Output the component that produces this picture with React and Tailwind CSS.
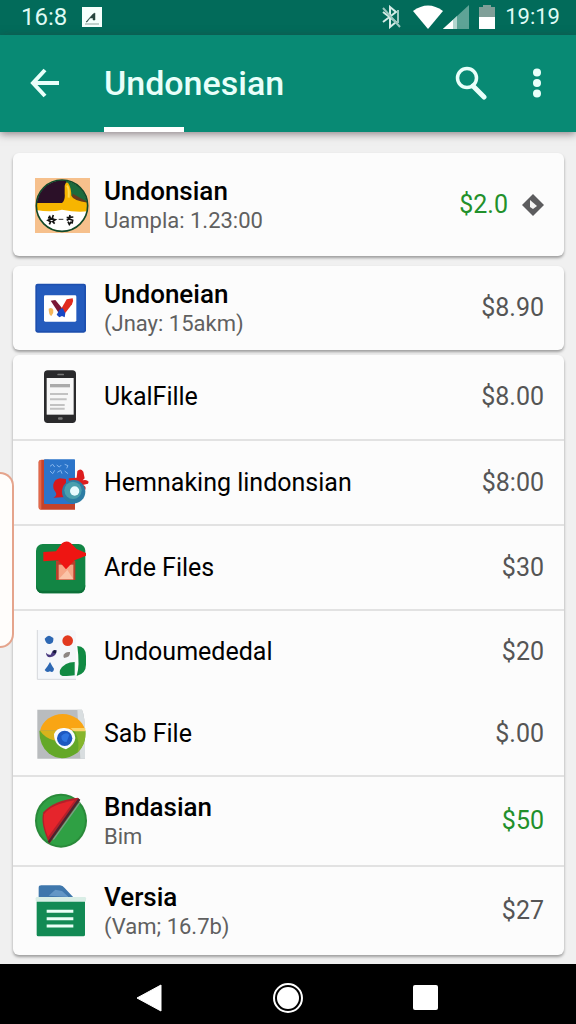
import React from 'react';

const AppBadge = () => (
  <svg viewBox="0 0 168 168" className="h-14 w-14">
    <defs>
      <clipPath id="badge">
        <circle cx="84" cy="86" r="76" />
      </clipPath>
    </defs>
    <rect x="3" y="3" width="165" height="165" fill="#f6c08c" />
    <g clipPath="url(#badge)">
      <rect width="168" height="168" fill="#fff" />
      <rect width="96" height="80" fill="#2b1028" />
      <rect x="96" width="72" height="80" fill="#1d6b3c" />
      <path d="M116 50l50 28h-56z" fill="#6a3a1c" />
      <path d="M0 78H84Q94 70 92 50V26Q96 10 104 20Q112 34 112 56Q118 72 168 78V102Q130 108 84 98Q50 108 0 98Z" fill="#f7b500" />
      <path d="M99 26Q106 34 104 62" stroke="#ffd84d" strokeWidth="6" fill="none" />
    </g>
    <circle cx="84" cy="86" r="77" fill="none" stroke="#12492a" strokeWidth="5" />
    <path d="M46 116l4 10-8 4 8 4-4 8M58 114l-4 12 10 2-8 6 6 6M42 122l18 4M98 122l20-2M108 114l-2 12-8 4M106 126l10 4-2 10M102 134l4 8 6-8" stroke="#111" strokeWidth="5" fill="none" />
    <path d="M74 127h14" stroke="#333" strokeWidth="3" />
  </svg>
);

const BlueFrame = () => (
  <svg viewBox="0 0 168 168" className="h-14 w-14">
    <rect x="4" y="11" width="152" height="147" rx="7" fill="#1d4fae" />
    <rect x="9" y="16" width="142" height="137" rx="4" fill="#245bbd" />
    <rect x="30" y="46" width="97" height="79" rx="4" fill="#fff" />
    <path d="M44 86q10-6 14 4q2 10-6 18q-8-4-8-22z" fill="#f5b65a" />
    <path d="M50 62l14-2 28 34-12 14z" fill="#7a1735" />
    <path d="M98 58l18-3q4 10-2 18l-22 28-14-8z" fill="#e02a1e" />
    <path d="M76 90l10-6 8 16-2 12-8-4-8 4-8-8z" fill="#1747c4" />
  </svg>
);

const Phone = () => (
  <svg viewBox="0 0 168 168" className="h-14 w-14">
    <rect x="30" y="4" width="96" height="158" rx="11" fill="#2a2a2c" />
    <rect x="38" y="27" width="81" height="110" fill="#f7f7f7" />
    <rect x="70" y="14" width="20" height="5" rx="2" fill="#777" />
    <rect x="72" y="145" width="14" height="7" rx="3" fill="#777" />
    <path d="M48 50h60" stroke="#aaa" strokeWidth="10" />
    <path d="M48 75h54M48 91h50M48 108h44M48 119h44" stroke="#c2c2c2" strokeWidth="6" />
  </svg>
);

const Book = () => (
  <svg viewBox="0 0 168 168" className="h-14 w-14">
    <path d="M14 22q0-8 10-8h20v128h79v22H22q-8 0-8-8z" fill="#c4432b" />
    <path d="M14 22q0-8 8-8v150q-8 0-8-8z" fill="#e2694a" />
    <rect x="30" y="13" width="93" height="134" rx="2" fill="#2b74c9" />
    <path d="M48 34l8-6 6 8M68 30l8 6 6-6M92 28l10 4-4 8M48 48l8 8 6-10M70 52l10-6 4 10M92 48l10 8" stroke="#86b6ee" strokeWidth="3" fill="none" />
    <path d="M58 88q4-16 20-18l18 2v54l-38 2q14-8 6-18-8-8-6-22z" fill="#d8171c" />
    <path d="M104 70l24-2 2-20q10-10 18 2l4 20-6 6q12-4 18 4l-2 6-16 4q12 4 8 14l-20 4-28-12z" fill="#dd1d1f" />
    <circle cx="119" cy="110" r="35" fill="#2d7da4" />
    <circle cx="117" cy="106" r="26" fill="#4a9fae" />
    <circle cx="122" cy="108" r="14" fill="#e8fbff" />
  </svg>
);

const ArrowBox = () => (
  <svg viewBox="0 0 168 168" className="h-14 w-14">
    <rect x="6" y="12" width="148" height="148" rx="20" fill="#128544" />
    <path d="M6 134q0 26 20 26h108q20 0 20-26q-4 18-20 18H26q-16 0-20-18z" fill="#0c7038" />
    <path d="M66 62h58v58H66z" fill="#b8402c" />
    <path d="M74 74h44v44H74z" fill="#f6a585" />
    <path d="M74 118l26-28 18 28z" fill="#fbc4a8" />
    <path d="M28 36l38-2 18-24q12-10 26-1l18 18 28 12v8l-34 14-26 27-24-27-44 3z" fill="#ee1512" />
  </svg>
);

const Shapes = () => (
  <svg viewBox="0 0 168 168" className="h-14 w-14">
    <path d="M10 18h104q12 0 12 14v134H10z" fill="#f5f7fa" />
    <path d="M10 18v148h116" fill="none" stroke="#d5d8dc" strokeWidth="3" />
    <path d="M32 44q10-12 16-8l10 6q2 16-10 18-12 2-16-16z" fill="#2c67b3" />
    <circle cx="101" cy="50" r="16" fill="#e23a1f" />
    <path d="M36 86q6 8 14 6l6-12 12-2q0 20-20 22-12-2-12-14z" fill="#4a3a80" />
    <circle cx="62" cy="83" r="5" fill="#161a3a" />
    <path d="M88 96q4-14 20-12q2 16-18 18z" fill="#8d8683" />
    <path d="M48 114q6 12 12 20-2 14-12 8-10 6-16-4 10-12 16-24z" fill="#2c67b3" />
    <path d="M78 138q14-24 44-24v40q-10 2-36 2-12-2-8-18z" fill="#118a43" />
    <path d="M130 66q26 2 26 30v26q0 26-28 34q10-30 2-90z" fill="#118a43" />
  </svg>
);

const Browser = () => (
  <svg viewBox="0 0 168 168" className="h-14 w-14">
    <path d="M10 11h134q9 20 9 70v77H10z" fill="#b9bcbe" />
    <path d="M130 11h14q9 20 9 70v77h-14z" fill="#d9dee0" />
    <path d="M18 74a70 66 0 0 1 136 0z" fill="#f9a514" />
    <path d="M16 74h138q4 40-24 66-46 32-86 2-28-24-28-68z" fill="#64a828" />
    <path d="M18 74h60l-14 30q-30-6-46-30z" fill="#d8b31c" />
    <path d="M122 74h32q4 40-24 66 10-30-8-66z" fill="#86b52c" />
    <path d="M110 66h44v10h-34z" fill="#fbd46b" />
    <path d="M60 84q8-20 32-18 28 0 32 30-2 22-28 34-36-10-36-46z" fill="#f7fbff" />
    <circle cx="92" cy="97" r="23" fill="#1c58c0" />
    <path d="M82 90q12-14 24-4l-8 22q-16 0-16-18z" fill="#2d74e0" />
  </svg>
);

const Disc = () => (
  <svg viewBox="0 0 168 168" className="h-14 w-14">
    <ellipse cx="81" cy="83" rx="78" ry="81" fill="#2a8a3a" />
    <ellipse cx="81" cy="83" rx="72" ry="75" fill="#2fa044" />
    <path d="M132 14l6 8-92 130q-28-60-18-94 30-36 104-44z" fill="#b3202a" />
    <path d="M122 22q-70 12-92 42-4 30 12 68z" fill="#e5252c" />
    <path d="M136 18L44 148" stroke="#4b2430" strokeWidth="7" />
    <path d="M138 28L58 140" stroke="#7b9c86" strokeWidth="4" />
  </svg>
);

const Drawer = () => (
  <svg viewBox="0 0 168 168" className="h-14 w-14">
    <path d="M14 14q0-7 8-7h56q8 0 14 8l28 30H14z" fill="#3f77ac" />
    <path d="M44 38l20-18 20 4 20 18z" fill="#6397c6" />
    <rect x="8" y="52" width="145" height="108" rx="5" fill="#128a54" />
    <rect x="5" y="42" width="151" height="14" rx="4" fill="#d9eee6" />
    <path d="M38 85h80M38 107h80M38 129h80" stroke="#e9fff6" strokeWidth="9" />
  </svg>
);

const groups = [
  [{ name: 'Undonsian', detail: 'Uampla: 1.23:00', price: '$2.0', paid: true, tag: true, bold: true, icon: AppBadge, size: 'min-h-[103px]' }],
  [{ name: 'Undoneian', detail: '(Jnay: 15akm)', price: '$8.90', bold: true, icon: BlueFrame, size: 'min-h-[84px]' }],
  [
    { name: 'UkalFille', price: '$8.00', icon: Phone, size: 'min-h-[84px]' },
    { name: 'Hemnaking lindonsian', price: '$8:00', icon: Book, size: 'min-h-[85px]', line: true },
    { name: 'Arde Files', price: '$30', icon: ArrowBox, size: 'min-h-[85px]', line: true },
    { name: 'Undoumededal', price: '$20', icon: Shapes, size: 'min-h-[83px]', line: true },
    { name: 'Sab File', price: '$.00', icon: Browser, size: 'min-h-[83px]' },
    { name: 'Bndasian', detail: 'Bim', price: '$50', paid: true, bold: true, icon: Disc, size: 'min-h-[90px]', line: true },
    { name: 'Versia', detail: '(Vam; 16.7b)', price: '$27', bold: true, icon: Drawer, size: 'min-h-[90px]', line: true },
  ],
];

const Row = ({ item }) => {
  const Icon = item.icon;
  return (
    <li className={`flex items-center gap-[14px] pl-[21px] pr-5 ${item.size} ${item.line ? 'border-t-2 border-[#e2e2e2]' : ''}`}>
      <Icon />
      <div className="min-w-0 flex-1">
        <p className={`leading-8 text-black ${item.bold ? 'text-[26px] font-medium' : 'text-[25px]'}`}>{item.name}</p>
        {item.detail && <p className="text-[22px] leading-7 text-[#606060]">{item.detail}</p>}
      </div>
      <span className={`text-[25px] leading-8 ${item.paid ? 'text-[#22902b]' : 'text-[#555]'}`}>{item.price}</span>
      {item.tag && (
        <svg viewBox="0 0 22 22" className="h-[22px] w-[22px]">
          <path d="M11 0l11 11-11 11L0 11z" fill="#5c5c5e" />
          <path d="M8 6l7 6-4 3-3-2z" fill="#f4f4f4" />
        </svg>
      )}
    </li>
  );
};

const StatusBar = () => (
  <div className="flex h-[35px] items-center bg-[#026b5a] pb-[2px] pl-[21px] pr-4 leading-8 text-[#dffaf4]">
    <span className="text-2xl">16:8</span>
    <svg viewBox="0 0 20 20" className="ml-[15px] h-5 w-5">
      <rect width="20" height="20" fill="#f5fffc" />
      <path d="M4 15L11 7L13 6V13H11V11H8L5 15ZM3 17h14" fill="#26443e" stroke="#26443e" strokeWidth="0.5" />
    </svg>
    <div className="ml-auto flex items-center">
      <svg viewBox="0 0 20 24" className="h-6 w-5">
        <path d="M2 7l13 10-6 5V2l6 5L2 17" fill="none" stroke="#d5ece7" strokeWidth="2" />
        <path d="M2 3l17 19M17 5v13" fill="none" stroke="#9cc8bf" strokeWidth="2" />
      </svg>
      <svg viewBox="0 0 30 24" className="ml-3 h-6 w-[30px]">
        <path d="M0 6Q15-5 30 6L15 24z" fill="#fff" />
      </svg>
      <svg viewBox="0 0 26 24" className="h-6 w-[26px]">
        <path d="M26 0v24H0z" fill="#5ea396" />
        <path d="M14 11v13H0z" fill="#b4d6cf" />
        <path d="M10 15v9H0z" fill="#fff" />
      </svg>
      <svg viewBox="0 0 16 24" className="ml-[10px] h-6 w-4">
        <path d="M4 0h8v2h4v10H0V2h4z" fill="#7f9f98" />
        <path d="M0 12h16v12H0z" fill="#fff" />
      </svg>
      <span className="ml-[10px] text-[22px]">19:19</span>
    </div>
  </div>
);

const Header = () => (
  <header className="relative bg-[#088a74] text-[#e9fffa] shadow-[0_2px_8px_rgba(60,40,50,0.55)]">
    <div className="flex h-[92px] items-center pl-[30px] pr-[27px] pt-1">
      <button type="button" aria-label="Back">
        <svg viewBox="0 0 30 30" className="block h-[30px] w-[30px]">
          <path d="M15 2L3 15l12 13M3 15h26" fill="none" stroke="currentColor" strokeWidth="4" />
        </svg>
      </button>
      <h1 className="ml-[44px] text-[34px] font-medium leading-10">Undonesian</h1>
      <button type="button" aria-label="Search" className="ml-auto">
        <svg viewBox="0 0 32 34" className="block h-[34px] w-8">
          <circle cx="12" cy="12" r="9.500" fill="none" stroke="currentColor" strokeWidth="3.500" />
          <path d="M18 20l11 11" stroke="currentColor" strokeWidth="5" strokeLinecap="round" />
        </svg>
      </button>
      <button type="button" aria-label="More options" className="ml-[38px]">
        <svg viewBox="0 0 24 30" className="block h-[30px] w-6">
          <circle cx="12" cy="4.500" r="4" fill="currentColor" />
          <circle cx="12" cy="15" r="4" fill="currentColor" />
          <circle cx="12" cy="25.500" r="4" fill="currentColor" />
        </svg>
      </button>
    </div>
    <div className="ml-[104px] h-[5px] w-20 bg-white"></div>
  </header>
);

const BottomNav = () => (
  <nav className="flex h-[60px] items-center justify-center gap-[108px] bg-black pt-2">
    <button type="button" aria-label="Back">
      <svg viewBox="0 0 30 30" className="block h-[30px] w-[30px]">
        <path d="M26 2v26L2 15z" fill="#fff" stroke="#fff" strokeLinejoin="round" />
      </svg>
    </button>
    <button type="button" aria-label="Home">
      <svg viewBox="0 0 30 30" className="block h-[30px] w-[30px]">
        <circle cx="15" cy="15" r="14" fill="none" stroke="#fff" strokeWidth="2" />
        <circle cx="15" cy="15" r="11" fill="#fff" />
      </svg>
    </button>
    <button type="button" aria-label="Recent apps">
      <svg viewBox="0 0 30 30" className="block h-[30px] w-[30px]">
        <rect x="2" y="2" width="25" height="25" rx="2" fill="#fff" />
      </svg>
    </button>
  </nav>
);

const App = () => {
  return (
    <div className="flex min-h-screen flex-col bg-[#f0f0f0] font-[Roboto,sans-serif]">
      <StatusBar />
      <Header />
      <main className="relative flex-1 pb-[9px] pl-[13px] pr-3 pt-[21px]">
        {/* edge panel handle, peeks in from the left */}
        <div className="absolute left-0 top-[340px] h-[176px] w-[14px] rounded-r-[14px] border-2 border-l-0 border-[#e5a48c] bg-[#fffdfb]"></div>
        {groups.map((items, i) => (
          <ul
            key={i}
            className={`rounded-md bg-[#fcfcfc] shadow-[0_2px_3px_rgba(0,0,0,0.35)] ${i === 1 ? 'mt-[10px]' : ''} ${i === 2 ? 'mt-[5px]' : ''}`}
          >
            {items.map((item) => (
              <Row key={item.name} item={item} />
            ))}
          </ul>
        ))}
      </main>
      <BottomNav />
    </div>
  );
};

export default App;
